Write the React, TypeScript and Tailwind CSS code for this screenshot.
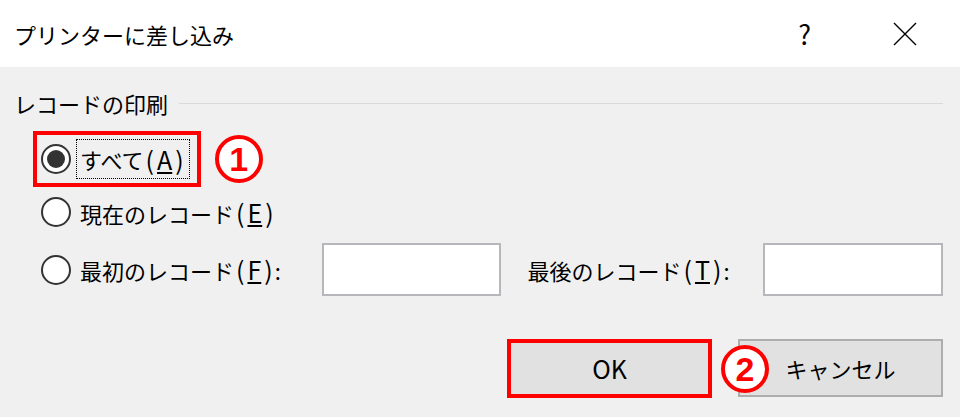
const font = "font-['Meiryo_UI','Noto_Sans_CJK_JP',sans-serif]";

const Radio = ({ checked }: { checked?: boolean }) => (
  <div className="w-[30px] h-[30px] shrink-0 rounded-full border-2 border-[#333333] bg-white flex items-center justify-center">
    {checked && <div className="w-[18px] h-[18px] rounded-full bg-[#333333]" />}
  </div>
);

// accelerator key in parens, like (A)
const Key = ({ k }: { k: string }) => (
  <span className="text-[25px] leading-none">
    <span className="px-[2px]">(</span>
    <span className="px-[1px] underline underline-offset-2">{k}</span>
    <span className="px-[2px]">)</span>
  </span>
);

const Badge = ({ n }: { n: string }) => (
  <div className="w-[48px] h-[48px] rounded-full border-4 border-[#ff0000] bg-white flex items-center justify-center">
    <span className="font-['Liberation_Sans',sans-serif] font-bold text-[34px] leading-none text-[#ff0000]">
      {n}
    </span>
  </div>
);

const App = () => {
  return (
    <div className={`w-[960px] h-[417px] bg-[#f0f0f0] text-black ${font} relative overflow-hidden`}>
      {/* title bar */}
      <div className="h-[67px] bg-white flex items-center pl-[14px] pr-[40px]">
        <span className="text-[22px] leading-none">プリンターに差し込み</span>
        <span className="ml-auto text-[27px] leading-none mr-[82px]">?</span>
        <svg width="24" height="24" viewBox="0 0 24 24" className="mr-[3px]">
          <path d="M1 1 L23 23 M23 1 L1 23" stroke="#000" strokeWidth="1.4" fill="none" />
        </svg>
      </div>

      {/* group */}
      <div className="pt-[21px] pr-[17px]">
        <div className="h-[30px] flex items-center pl-[14px] gap-[11px]">
          <span className="text-[22px] leading-none">レコードの印刷</span>
          <div className="flex-1 h-px bg-[#dadada]" />
        </div>

        <div className="mt-[13px] pl-[33px] flex items-center">
          <div className="border-4 border-[#ff0000] h-[56px] pl-[4px] pr-[7px] flex items-center gap-[5px]">
            <Radio checked />
            <div className="border border-dotted border-black h-[40px] px-[3px] flex items-center text-[22px] leading-none">
              すべて<Key k="A" />
            </div>
          </div>
          <div className="ml-[14px]">
            <Badge n="1" />
          </div>
        </div>

        <div className="mt-[10px] pl-[41px] h-[30px] flex items-center gap-[9px] text-[22px] leading-none">
          <Radio />
          <span>
            現在のレコード<Key k="E" />
          </span>
        </div>

        <div className="mt-[16px] pl-[41px] h-[53px] flex items-center text-[22px] leading-none">
          <Radio />
          <span className="ml-[9px] w-[242px]">
            最初のレコード<Key k="F" />:
          </span>
          <div className="w-[180px] h-[53px] bg-white border-2 border-[#b7b7bb]" />
          <span className="ml-[26px] w-[236px]">
            最後のレコード<Key k="T" />:
          </span>
          <div className="w-[180px] h-[53px] bg-white border-2 border-[#b7b7bb]" />
        </div>

        <div className="mt-[43px] flex justify-end gap-[26px] text-[22px] leading-none">
          <div className="w-[205px] h-[59px] border-4 border-[#ff0000] bg-[#e1e1e1] flex items-center justify-center text-[25px]">
            OK
          </div>
          <div className="w-[205px] h-[58px] border-2 border-[#adadad] bg-[#e1e1e1] flex items-center justify-center">
            キャンセル
          </div>
        </div>
      </div>

      <div className="absolute left-[721px] top-[345px]">
        <Badge n="2" />
      </div>
    </div>
  );
};

export default App;
